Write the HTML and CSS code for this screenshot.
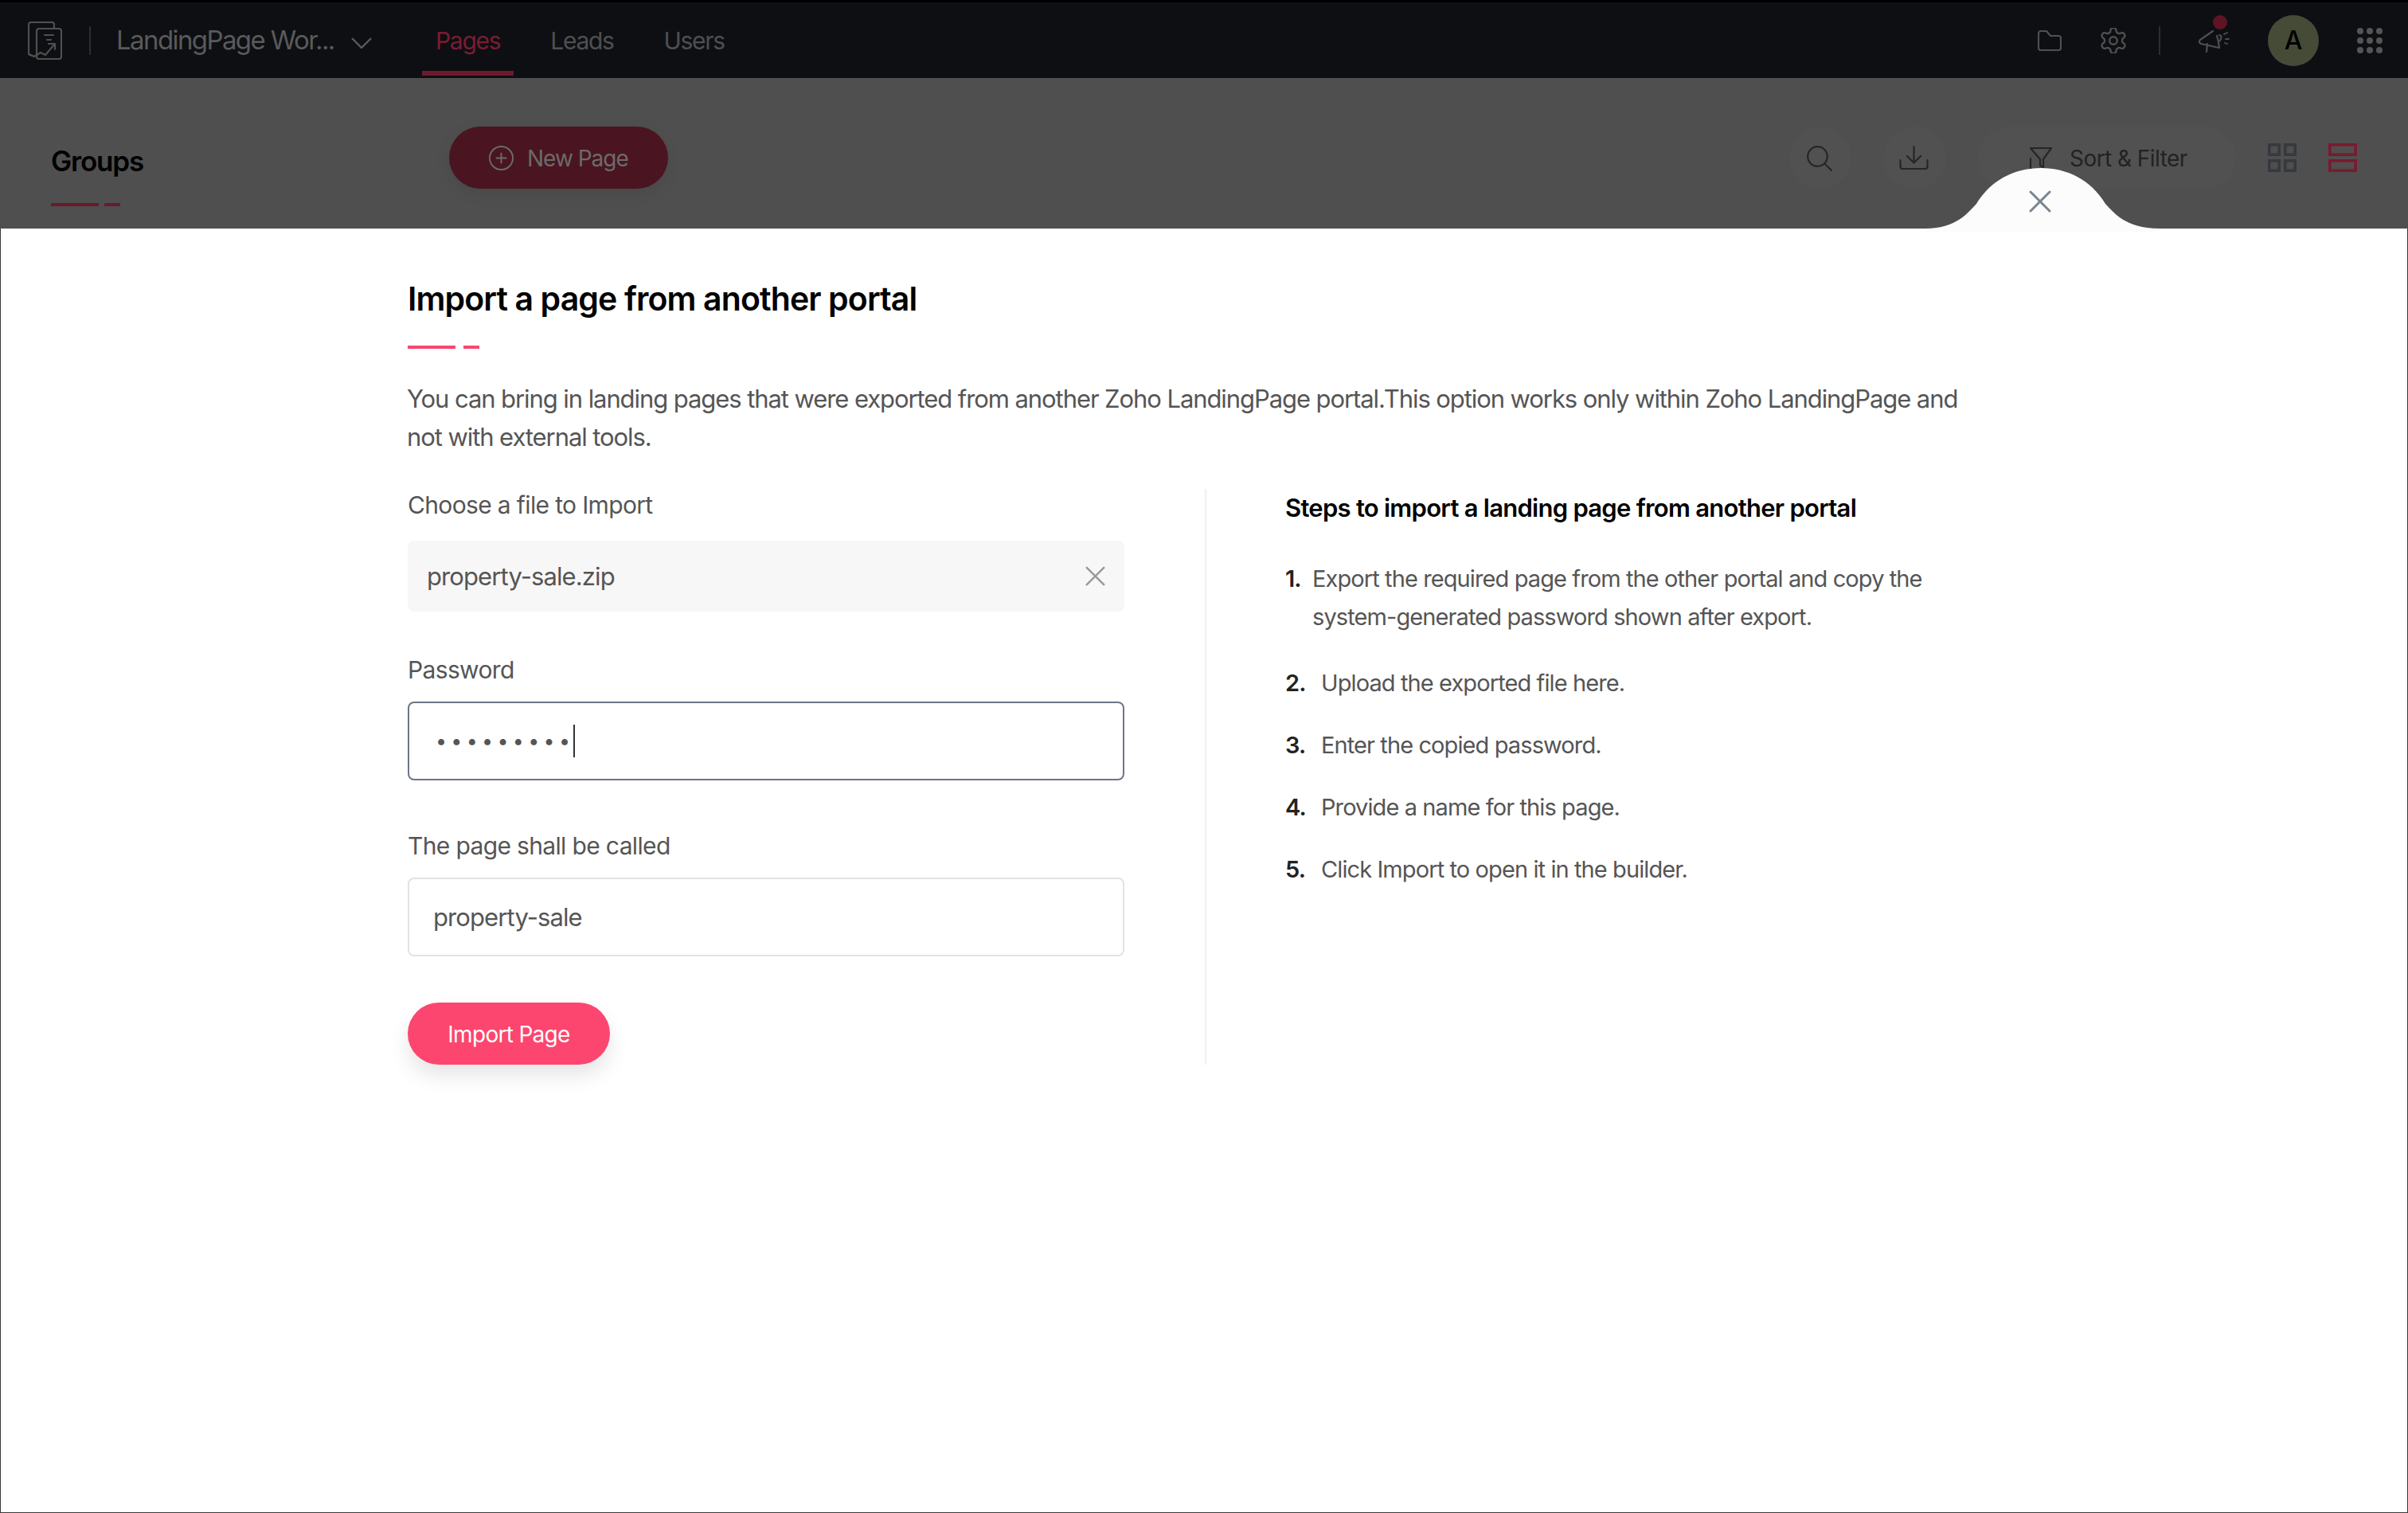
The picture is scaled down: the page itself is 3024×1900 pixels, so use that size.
FILE: index.html
```html
<!DOCTYPE html>
<html lang="en">
<head>
<meta charset="utf-8">
<title>Import a page</title>
<link rel="stylesheet" href="styles.css">
</head>
<body>
<div class="app">
  <header class="topbar">
    <svg class="logo" viewBox="0 0 43 48" fill="none" stroke="#4f4f4f" stroke-width="2.2" stroke-linejoin="round" stroke-linecap="round">
      <path d="M33 8V4a3 3 0 0 0-3-3H4a3 3 0 0 0-3 3v37l7 3"/>
      <path d="M11 37V12a3 3 0 0 1 3-3h25a3 3 0 0 1 3 3v32a3 3 0 0 1-3 3H14a3 3 0 0 1-3-3v-7"/>
      <path d="M1 41l7 3 8-5 6 3 11-13"/>
      <path d="M26 28h8v7"/>
      <path d="M21 17h11M24 23h5"/>
    </svg>
    <span class="vsep"></span>
    <span class="workspace">LandingPage Wor...</span>
    <svg class="chevron" viewBox="0 0 26 14" fill="none" stroke="#5a5a5a" stroke-width="2.4"><path d="M1 1l12 12L25 1"/></svg>
    <nav class="nav">
      <a class="nav-item nav-active">Pages</a>
      <a class="nav-item">Leads</a>
      <a class="nav-item">Users</a>
    </nav>
    <div class="top-actions">
      <svg class="ic-folder" viewBox="0 0 30 26" fill="none" stroke="#4f4f4f" stroke-width="2.2" stroke-linejoin="round"><path d="M1 4a3 3 0 0 1 3-3h7l5 6h10a3 3 0 0 1 3 3v12a3 3 0 0 1-3 3H4a3 3 0 0 1-3-3z"/></svg>
      <svg class="ic-gear" viewBox="2 2 20 20" fill="none" stroke="#4f4f4f" stroke-width="1.5"><path d="M12.22 2h-.44a2 2 0 0 0-2 2v.18a2 2 0 0 1-1 1.73l-.43.25a2 2 0 0 1-2 0l-.15-.08a2 2 0 0 0-2.73.73l-.22.38a2 2 0 0 0 .73 2.73l.15.1a2 2 0 0 1 1 1.72v.51a2 2 0 0 1-1 1.74l-.15.09a2 2 0 0 0-.73 2.73l.22.38a2 2 0 0 0 2.73.73l.15-.08a2 2 0 0 1 2 0l.43.25a2 2 0 0 1 1 1.73V20a2 2 0 0 0 2 2h.44a2 2 0 0 0 2-2v-.18a2 2 0 0 1 1-1.73l.43-.25a2 2 0 0 1 2 0l.15.08a2 2 0 0 0 2.73-.73l.22-.39a2 2 0 0 0-.73-2.73l-.15-.08a2 2 0 0 1-1-1.74v-.5a2 2 0 0 1 1-1.74l.15-.09a2 2 0 0 0 .73-2.73l-.22-.38a2 2 0 0 0-2.73-.73l-.15.08a2 2 0 0 1-2 0l-.43-.25a2 2 0 0 1-1-1.73V4a2 2 0 0 0-2-2z"/><circle cx="12" cy="12" r="3"/></svg>
      <span class="vsep vsep-right"></span>
      <span class="mega">
        <svg class="ic-mega" viewBox="0 0 40 28" fill="none" stroke="#4f4f4f" stroke-width="2.2" stroke-linecap="round" stroke-linejoin="round"><path d="M19 1L3 12c-2 2-1 4 1 5l23 5c-1-5-1-10-3-15"/><path d="M12 17l-1 10"/><path d="M27 6c2 0 3 2 2 5s-2 3-3 3"/><path d="M33 5l4-2M35 11h4M34 16l3 1" stroke-width="1.8"/></svg>
        <span class="mega-dot"></span>
      </span>
      <span class="avatar">A</span>
      <svg class="ic-apps" viewBox="0 0 32 32" fill="#555"><circle cx="4" cy="4" r="4"/><circle cx="16" cy="4" r="4"/><circle cx="28" cy="4" r="4"/><circle cx="4" cy="16" r="4"/><circle cx="16" cy="16" r="4"/><circle cx="28" cy="16" r="4"/><circle cx="4" cy="28" r="4"/><circle cx="16" cy="28" r="4"/><circle cx="28" cy="28" r="4"/></svg>
    </div>
  </header>

  <section class="subbar">
    <aside class="groups">
      <h2 class="groups-title">Groups</h2>
      <div class="dash dash-dim"><i></i><b></b></div>
    </aside>
    <div class="toolbar">
      <button class="new-page">
        <svg class="ic-plus" viewBox="0 0 32 32" fill="none" stroke="#6b6b6b" stroke-width="2"><circle cx="16" cy="16" r="15"/><path d="M16 9v14M9 16h14"/></svg>
        <span class="btn-text">New Page</span>
      </button>
      <span class="spacer"></span>
      <span class="tool tool-search">
        <svg class="ic-search" viewBox="0 0 32 32" fill="none" stroke="#262626" stroke-width="2.2" stroke-linecap="round"><circle cx="13.5" cy="13.5" r="12.3"/><path d="M22.5 22.5L31 31"/></svg>
      </span>
      <span class="tool tool-down">
        <svg class="ic-down" viewBox="0 0 37 30" fill="none" stroke="#262626" stroke-width="2.2" stroke-linecap="round" stroke-linejoin="round"><path d="M18.5 1v20M10 13l8.5 8.5L27 13"/><path d="M1.5 18v8a3 3 0 0 0 3 3h28a3 3 0 0 0 3-3v-8"/></svg>
      </span>
      <span class="sort">
        <svg class="ic-filter" viewBox="0 0 34 40" fill="none" stroke="#262626" stroke-width="2.2" stroke-linejoin="round" stroke-linecap="round"><path d="M7 1h26L23 15v10l-4 -2V15z"/><path d="M7 14v24M1 32l6 6 6-6"/></svg>
        <span class="btn-text">Sort &amp; Filter</span>
      </span>
      <svg class="ic-view" viewBox="0 0 36 36" fill="none" stroke="#36393e" stroke-width="3.6"><rect x="1.8" y="1.8" width="12.4" height="12.4"/><rect x="21.8" y="1.8" width="12.4" height="12.4"/><rect x="1.8" y="21.8" width="12.4" height="12.4"/><rect x="21.8" y="21.8" width="12.4" height="12.4"/></svg>
      <svg class="ic-view" viewBox="0 0 36 36" fill="none" stroke="#7a1a30" stroke-width="3.6"><rect x="1.8" y="1.8" width="32.4" height="12.4"/><rect x="1.8" y="21.8" width="32.4" height="12.4"/></svg>
    </div>
  </section>

  <main class="modal">
    <div class="close-bump">
      <svg class="bump-shape" viewBox="-12 0 294 81" fill="#fcfcfc"><path d="M-12 76C28 76 42 55 52 45 70 15 100 0 133 0 166 0 196 15 214 45 224 55 238 76 282 76V81H-12Z"/></svg>
      <svg class="bump-x" viewBox="0 0 28 28" fill="none" stroke="#7a8594" stroke-width="3" stroke-linecap="round"><path d="M2 2l24 24M26 2L2 26"/></svg>
    </div>
    <h1 class="title">Import a page from another portal</h1>
    <div class="dash"><i></i><b></b></div>
    <p class="desc">You can bring in landing pages that were exported from another Zoho LandingPage portal.This option works only within Zoho LandingPage and<br>not with external tools.</p>
    <div class="columns">
      <form class="form">
        <div class="label">Choose a file to Import</div>
        <div class="file-box">
          <span>property-sale.zip</span>
          <svg class="file-x" viewBox="0 0 24 24" fill="none" stroke="#999" stroke-width="2.4"><path d="M1 1l22 22M23 1L1 23"/></svg>
        </div>
        <div class="label label-pw">Password</div>
        <div class="input input-focus"><span class="dots">•••••••••</span><span class="caret"></span></div>
        <div class="label label-name">The page shall be called</div>
        <div class="input input-name">property-sale</div>
        <button class="import" type="button">Import Page</button>
      </form>
      <div class="steps">
        <h3 class="steps-title">Steps to import a landing page from another portal</h3>
        <ol class="step-list">
          <li class="step step-first"><b>1.</b><span>Export the required page from the other portal and copy the<br>system-generated password shown after export.</span></li>
          <li class="step"><b>2.</b><span>Upload the exported file here.</span></li>
          <li class="step"><b>3.</b><span>Enter the copied password.</span></li>
          <li class="step"><b>4.</b><span>Provide a name for this page.</span></li>
          <li class="step"><b>5.</b><span>Click Import to open it in the builder.</span></li>
        </ol>
      </div>
    </div>
  </main>
</div>
</body>
</html>
```

FILE: styles.css
```css
* { box-sizing: border-box; }
html, body { margin: 0; padding: 0; }
body { font-family: Inter, "Noto Sans", "Liberation Sans", sans-serif; background: #fff; }
.app { width: 3024px; height: 1900px; display: flex; flex-direction: column; overflow: hidden; }

/* top bar */
.topbar { height: 98px; border-top: 3px solid #000; background: #0d0f13; display: flex; align-items: center; padding: 0 32px 0 35px; }
.logo { width: 43px; height: 48px; margin-right: 34px; }
.vsep { width: 2px; height: 36px; background: #2c2d30; }
.workspace { margin-left: 32px; padding-bottom: 2px; font-size: 33px; letter-spacing: -1.6px; color: #5a5a5a; width: 281px; white-space: nowrap; }
.chevron { width: 26px; height: 14px; margin-left: 14px; margin-top: 6px; }
.nav { display: flex; align-self: stretch; margin-left: 63px; gap: 29px; }
.nav-item { padding: 10px 17px 0; font-size: 30px; letter-spacing: -1.3px; color: #4f4f4f; display: flex; align-items: center; height: 92px; border-bottom: 6px solid transparent; }
.nav-active { color: #7a1c34; border-bottom-color: #6e1a2e; }
.top-actions { margin-left: auto; display: flex; align-items: center; }
.ic-folder { width: 30px; height: 26px; }
.ic-gear { width: 32px; height: 32px; margin-left: 49px; }
.vsep-right { margin-left: 41px; }
.mega { position: relative; width: 40px; height: 28px; margin-left: 47px; margin-top: 2px; }
.ic-mega { width: 40px; height: 28px; display: block; }
.mega-dot { position: absolute; left: 19px; top: -19px; width: 18px; height: 18px; border-radius: 50%; background: #5f1426; }
.avatar { width: 64px; height: 64px; border-radius: 50%; background: #454b37; color: #000; font-size: 32px; font-weight: 500; display: flex; align-items: center; justify-content: center; margin-left: 48px; }
.ic-apps { width: 32px; height: 32px; margin-left: 48px; }

/* sub header */
.subbar { height: 189px; background: #4f4f4f; display: flex; }
.groups { width: 500px; padding: 79px 0 0 64px; }
.groups-title { margin: 0; font-size: 35px; line-height: 50px; font-weight: 600; letter-spacing: -1.2px; color: #000; }
.groups .dash { margin-top: 28px; gap: 7px; }
.toolbar { flex: 1; display: flex; align-items: flex-start; padding: 61px 64px 0 64px; gap: 40px; }
.new-page { width: 275px; height: 78px; border: 0; border-radius: 39px; background: #4a1520; box-shadow: 0 6px 20px rgba(0,0,0,.08); color: #6b6b6b; font: inherit; font-size: 28px; letter-spacing: -1px; display: flex; align-items: center; padding: 0 0 0 50px; gap: 17px; }
.btn-text { padding-top: 2px; }
.ic-plus { width: 31px; height: 31px; }
.spacer { flex: 1; }
.tool { height: 78px; width: 78px; border-radius: 39px; background: #515151; display: flex; align-items: center; justify-content: center; }
.tool-down { width: 79px; }
.ic-search { width: 32px; height: 32px; margin: 2px 3px 0 0; }
.ic-down { width: 37px; height: 30px; margin-right: 3px; }
.sort { width: 324px; height: 78px; border-radius: 39px; background: #515151; display: flex; align-items: center; padding: 0 0 0 59px; gap: 22px; font-size: 28px; letter-spacing: -.55px; color: #222; }
.ic-filter { width: 34px; height: 40px; margin-top: 14px; }
.ic-view { width: 36px; height: 36px; margin-top: 21px; }

/* modal */
.modal { position: relative; flex: 1; background: #fff; padding: 63px 0 0 511px; border: solid #3a3a3a; border-width: 0 1px 1px 1px; }
.close-bump { position: absolute; left: 2417px; top: -76px; width: 294px; height: 81px; }
.bump-shape { width: 294px; height: 81px; display: block; }
.bump-x { position: absolute; left: 130px; top: 28px; width: 28px; height: 28px; }
.title { margin: 0; font-size: 41px; line-height: 50px; font-weight: 600; letter-spacing: -.88px; color: #000; }
.dash { display: flex; gap: 10px; margin-top: 34px; }
.dash i { width: 60px; height: 4px; background: #f9476f; }
.dash b { width: 20px; height: 4px; background: #f9476f; }
.dash-dim i, .dash-dim b { background: #6a1a2d; }
.desc { margin: 39px 0 0 -1px; font-size: 31px; line-height: 48px; letter-spacing: -1.08px; color: #555; white-space: nowrap; }
.columns { display: flex; margin-top: 41px; height: 723px; }
.form { width: 900px; display: flex; flex-direction: column; align-items: flex-start; }
.label { font-size: 30px; line-height: 40px; letter-spacing: -.65px; color: #555; }
.label-pw { margin-top: 53px; }
.label-name { margin-top: 62px; }
.file-box { width: 100%; height: 89px; margin-top: 25px; background: #f7f7f7; border-radius: 8px; display: flex; align-items: center; justify-content: space-between; padding: 0 24px; font-size: 31px; letter-spacing: -.9px; color: #555; }
.file-x { width: 25px; height: 25px; }
.input { width: 100%; border-radius: 8px; display: flex; align-items: center; background: #fff; }
.input-focus { height: 100px; margin-top: 20px; border: 2px solid #6c7686; padding-left: 33px; }
.dots { font-size: 25px; letter-spacing: 5.3px; color: #555; line-height: 1; }
.caret { width: 2px; height: 41px; background: #333; margin-left: -1px; }
.input-name { height: 100px; margin-top: 20px; border: 2px solid #e2e2e2; padding-left: 30px; font-size: 31px; letter-spacing: -.9px; color: #555; }
.import { margin-top: 58px; width: 254px; height: 78px; border: 0; border-radius: 39px; background: #fc466f; color: #fff; font: inherit; font-size: 28px; letter-spacing: -.7px; box-shadow: 0 14px 26px rgba(0,0,0,.1); padding: 2px 0 0; }
.steps { margin-left: 101px; border-left: 2px solid #f0f0f0; padding-left: 99px; }
.steps-title { margin: 0; font-size: 31px; line-height: 48px; font-weight: 600; letter-spacing: -.74px; color: #000; }
.step-list { list-style: none; margin: 41px 0 0; padding: 0; }
.step { display: flex; gap: 11px; font-size: 29px; line-height: 48px; letter-spacing: -.9px; color: #555; margin-bottom: 30px; white-space: nowrap; }
.step b { font-weight: 600; color: #222; width: 34px; }
.step-first { margin-bottom: 35px; gap: 0; }
```
